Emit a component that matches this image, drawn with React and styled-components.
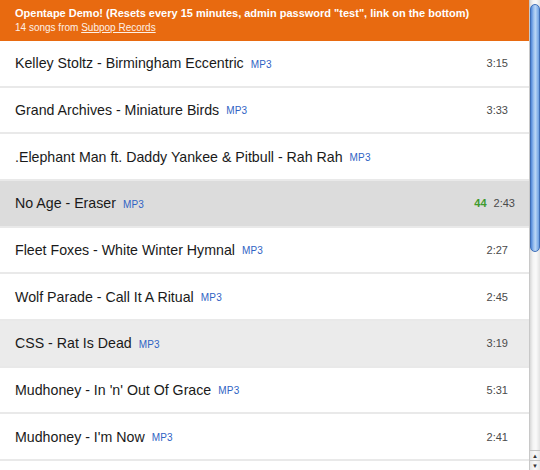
import React from "react";
import styled, { createGlobalStyle } from "styled-components";

const Global = createGlobalStyle`
  html, body { margin: 0; padding: 0; background: #fff; }
  body { font-family: "Liberation Sans", Arial, Helvetica, sans-serif; }
  #root { width: 540px; height: 470px; }
`;

const Frame = styled.div`
  display: flex;
  width: 540px;
  height: 470px;
  overflow: hidden;
  background: #fff;
`;

const Main = styled.div`
  flex: 1;
  display: flex;
  flex-direction: column;
  min-width: 0;
  overflow: hidden;
`;

const Header = styled.header`
  flex-shrink: 0;
  background: #e86a10;
  height: 41px;
  box-sizing: border-box;
  padding: 6px 15px 0;
  color: #fff;
`;

const Title = styled.h1`
  margin: 0;
  font-size: 11px;
  line-height: 15px;
  font-weight: bold;
`;

const Sub = styled.div`
  margin-top: 1px;
  font-size: 10px;
  line-height: 12px;
  color: #fdf0e6;
  a { color: inherit; text-decoration: underline; }
`;

const List = styled.ul`
  flex-shrink: 0;
  list-style: none;
  margin: 0;
  padding: 0;
`;

const Row = styled.li`
  display: flex;
  align-items: center;
  height: 44.67px;
  border-bottom: 2px solid #e9e9e9;
  padding: 0 ${(p) => (p.$state === "playing" ? 14 : 21)}px 0 15px;
  background: ${(p) =>
    p.$state === "playing" ? "#dcdcdc" : p.$state === "hover" ? "#ebebeb" : "#fff"};
`;

const Name = styled.span`
  font-size: 14.2px;
  color: #1a1a1a;
  white-space: nowrap;
`;

const Mp3 = styled.a`
  margin-left: 7px;
  font-size: 10px;
  letter-spacing: 0.2px;
  color: #2f63c4;
  text-decoration: none;
  position: relative;
  top: 1px;
`;

const Right = styled.span`
  margin-left: auto;
  display: flex;
  align-items: center;
  gap: 7px;
  font-size: 11px;
  color: #4a4a4a;
`;

const Count = styled.span`
  color: #3f9a2e;
  font-weight: bold;
`;

const Bar = styled.div`
  width: 11px;
  flex-shrink: 0;
  display: flex;
  flex-direction: column;
  background: linear-gradient(to right, #d8d8d8 0, #f4f4f4 30%, #fafafa 60%, #e2e2e2 100%);
  border-left: 1px solid #c8c8c8;
  box-sizing: border-box;
`;

const Thumb = styled.div`
  margin-top: 4px;
  height: 248px;
  border-radius: 5px;
  border: 1px solid #3f6fb8;
  box-sizing: border-box;
  background: linear-gradient(to right, #4f86d8 0, #9cc2f0 35%, #b9d5f5 55%, #6c9fe2 100%);
`;

const Track = styled.div`
  flex: 1;
`;

const Arrow = styled.div`
  height: 9px;
  display: flex;
  align-items: center;
  justify-content: center;
  font-size: 6px;
  color: #333;
  border-top: 1px solid #c4c4c4;
  background: linear-gradient(to right, #e6e6e6, #fafafa 50%, #e6e6e6);
`;

const songs = [
  { name: "Kelley Stoltz - Birmingham Eccentric", time: "3:15" },
  { name: "Grand Archives - Miniature Birds", time: "3:33" },
  { name: ".Elephant Man ft. Daddy Yankee & Pitbull - Rah Rah", time: "" },
  { name: "No Age - Eraser", time: "2:43", state: "playing", count: "44" },
  { name: "Fleet Foxes - White Winter Hymnal", time: "2:27" },
  { name: "Wolf Parade - Call It A Ritual", time: "2:45" },
  { name: "CSS - Rat Is Dead", time: "3:19", state: "hover" },
  { name: "Mudhoney - In 'n' Out Of Grace", time: "5:31" },
  { name: "Mudhoney - I'm Now", time: "2:41" },
];

export default function App() {
  return (
    <>
      <Global />
      <Frame>
        <Main>
          <Header>
            <Title>
              Opentape Demo! (Resets every 15 minutes, admin password "test", link on the bottom)
            </Title>
            <Sub>
              14 songs from <a href="#">Subpop Records</a>
            </Sub>
          </Header>
          <List>
            {songs.map((s, i) => (
              <Row key={i} $state={s.state}>
                <Name>{s.name}</Name>
                <Mp3 href="#">MP3</Mp3>
                <Right>
                  {s.count && <Count>{s.count}</Count>}
                  {s.time && <span>{s.time}</span>}
                </Right>
              </Row>
            ))}
          </List>
        </Main>
        <Bar>
          <Thumb />
          <Track />
          <Arrow>▲</Arrow>
          <Arrow>▼</Arrow>
        </Bar>
      </Frame>
    </>
  );
}
